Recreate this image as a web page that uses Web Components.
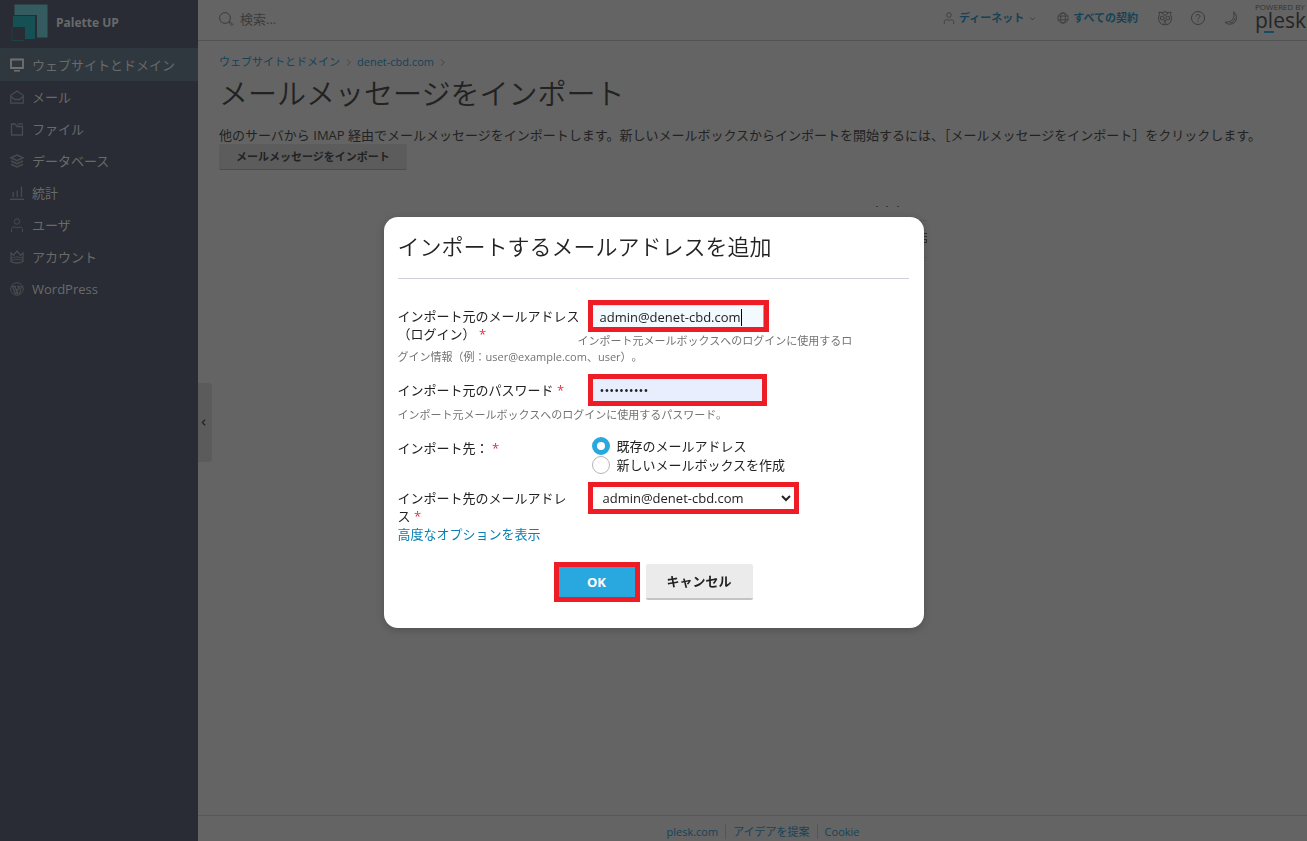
<!DOCTYPE html>
<html lang="ja">
<head>
<meta charset="utf-8">
<title>メールメッセージをインポート</title>
<style>
html, body { height: 100%; }
body {
    margin: 0;
    background: #646464;
    color: #222;
    font: 13px/18px "Open Sans", "Noto Sans CJK JP", sans-serif;
    overflow: hidden;
}
</style>
</head>
<body>
<plesk-app></plesk-app>

<script>
function makeTemplate(html) {
    const template = document.createElement('template');
    template.innerHTML = html;
    return template;
}

// Base class: clones the template of the subclass into an open shadow root
class BaseElement extends HTMLElement {
    constructor() {
        super();
        const shadowRoot = this.attachShadow({mode: 'open'});
        shadowRoot.appendChild(this.constructor.template.content.cloneNode(true));
    }
}

const ICONS = {
    monitor: '<path d="M1 1.500h12v8.500H1z" stroke-width="1.800"/><path d="M4 12.800h6" stroke-width="1.600"/>',
    mail: '<path d="M.8 5.300 7 1l6.200 4.300v7.900H.8z" stroke-width="1.300"/><path d="M1 6.500l3.500 3h5l3.500-3" stroke-width="1.300"/>',
    folder: '<path d="M1.500 2h3.500l2 2.500h5.500v8.500h-11z" stroke-width="1.300"/><path d="M7.500 1.500l1 1.500M9 1.800h4" stroke-width="1.300"/>',
    stack: '<path d="M7 1l6 2.800-6 2.800-6-2.800z" stroke-width="1.500"/><path d="M1 7l6 2.800L13 7M1 10.200l6 2.800 6-2.800" stroke-width="1.500"/>',
    stats: '<path d="M0 13.300h14" stroke-width="1.400"/><path d="M3.200 11V6M7.200 11V4.500M11.500 11V.5" stroke-width="1.300"/>',
    user: '<circle cx="7" cy="3.500" r="2.700"/><path d="M1.500 14v-2.500c0-1.500 1-2.500 2.500-2.500h1c1 1 3 1 4 0h1c1.500 0 2.500 1 2.500 2.500V14"/>',
    crown: '<path d="M1 3l2.500 2.200L7 1l3.500 4.200L13 3v8.500c-2.500 2-9.500 2-12 0z" stroke-width="1.300"/><path d="M1 8.500c3-2 9-2 12 0"/><path d="M1 10.800c3-2 9-2 12 0"/>',
    wordpress: '<circle cx="7" cy="7" r="6.300"/><path d="M2.500 4.300l3 8M4.800 4.300l3.200 8M8.500 5.500l-2.500 6.500M2 4.300h4M7 4.300h3.500M9 4.300c0 2 2 3 1.500 4.500L9 12M11.500 4l.7 2.500" stroke-width="1.300"/>',
    globe: '<circle cx="7" cy="7" r="6"/><ellipse cx="7" cy="7" rx="2.800" ry="6"/><path d="M1.500 4.800h11M1.500 9.200h11"/>',
    search: '<circle cx="6" cy="6" r="5.400"/><path d="M10 10l1-.500 2.800 3-1 1-2.800-2.800z"/>',
    panda: '<path d="M1.500 3.500L1 1l3 .8L7 .5l3 1.300 3-.8-.5 2.500c1.200 2 1.200 4.500.5 6.500-1 2.500-3 3.800-6 3.800S2 12.500 1 10C.3 8 .3 5.500 1.500 3.500z"/><path d="M4 2l3 2.500L10 2M6 9.500h2l-1 1.200zM5.500 12h3"/><circle cx="4.200" cy="7" r="1.900"/><circle cx="9.800" cy="7" r="1.900"/>',
    help: '<circle cx="7" cy="7" r="6.500"/><path d="M5 5.500c0-2.700 4-2.500 4-.2 0 1.500-2 1.500-2 3.200M7 9.800v1.200"/>',
    moon: '<path d="M9.500.8c5 3.500 3.500 12.400-3.500 12.400-2 0-3.800-.7-5-2.200 7 1 10.500-4.500 8.500-10.200z"/><path d="M11 7.500c-1 2.500-2.500 4-5 4.500"/>',
    left: '<path d="M9 3.500L5.500 7 9 10.500" stroke-width="1.500"/>',
    right: '<path d="M5 2.500L9.500 7 5 11.500" stroke-width="1.300"/>',
    down: '<path d="M3.500 5.500L7 9l3.500-3.500" stroke-width="1.500"/>',
};

// <line-icon name="mail">: size comes from --size, colour from `color`
class LineIcon extends BaseElement {
    static observedAttributes = ['name'];
    static template = makeTemplate(`<style>
:host { display: inline-block; flex: none; width: var(--size, 14px); height: var(--size, 14px); }
svg { display: block; width: 100%; height: 100%; fill: none; stroke: currentColor; overflow: visible; }
</style><svg viewBox="0 0 14 14" aria-hidden="true"></svg>`);

    attributeChangedCallback(name, oldValue, value) {
        this.shadowRoot.querySelector('svg').innerHTML = ICONS[value] || '';
    }
}
customElements.define('line-icon', LineIcon);

class NavItem extends BaseElement {
    static template = makeTemplate(`<style>
:host { display: block; }
a {
    display: flex;
    align-items: center;
    gap: 8px;
    height: 32px;
    padding: 0 10px;
    color: #696a6b;
    text-decoration: none;
}
line-icon { color: #484a4e; }
:host([active]) a { height: 33px; background: #30383f; }
:host([active]) line-icon { color: #707070; }
</style><a href="#"><line-icon></line-icon><slot></slot></a>`);

    connectedCallback() {
        this.shadowRoot.querySelector('line-icon').setAttribute('name', this.getAttribute('icon'));
    }
}
customElements.define('nav-item', NavItem);

class SideBar extends BaseElement {
    static template = makeTemplate(`<style>
:host { display: block; flex: none; width: 198px; background: #292c34; }
header {
    display: flex;
    align-items: center;
    gap: 8px;
    height: 48px;
    padding: 0 11px 3px;
    box-sizing: border-box;
    color: #686a6c;
    font-size: 12px;
    font-weight: 700;
}
header svg { width: 37px; height: 38px; }
</style>
<header>
    <svg viewBox="0 0 37 38" aria-hidden="true">
        <path d="M3.500.5h33v33H26V11H3.500z" fill="#345c60"/>
        <path d="M2 12h22v23H14V23H2z" fill="#155054"/>
        <path d="M1 23.500v13h11.500" fill="none" stroke="#1d4347"/>
    </svg>
    <span>Palette UP</span>
</header>
<nav><slot></slot></nav>`);
}
customElements.define('side-bar', SideBar);

class TopBar extends BaseElement {
    static template = makeTemplate(`<style>
:host {
    display: flex;
    align-items: center;
    height: 40px;
    padding-left: 21px;
    border-bottom: 1px solid #525252;
    color: #3c3c3c;
}
.search { display: flex; align-items: center; gap: 7px; flex: 1; padding-bottom: 3px; }
input { flex: 1; min-width: 0; padding: 0; border: 0; outline: 0; background: none; font: inherit; color: inherit; }
input::placeholder { color: #3c3c3c; opacity: 1; }
.tools { display: flex; align-items: center; gap: 20px; padding: 0 1px 4px 0; }
a { display: flex; align-items: center; gap: 4px; color: #164256; font-size: 11px; font-weight: 700; text-decoration: none; }
a line-icon { --size: 12px; color: #3c3c3c; }
a .caret { --size: 9px; }
button { display: flex; padding: 0; border: 0; background: none; color: inherit; }
.tools button + button { margin-left: -1px; }
.brand { flex: none; margin-left: -3px; color: #252525; }
.brand small { display: block; font-size: 8px; line-height: 8px; white-space: nowrap; color: #333; }
.brand b { display: block; font-size: 21px; line-height: 18px; font-weight: 400; }
.brand i { display: block; width: 10px; height: 2px; margin: 2px 0 0 9px; background: #144d61; }
</style>
<label class="search"><line-icon name="search"></line-icon><input type="search" placeholder="検索..." aria-label="検索"></label>
<div class="tools">
    <a href="#"><line-icon name="user"></line-icon>ディーネット<line-icon class="caret" name="down"></line-icon></a>
    <a href="#"><line-icon name="globe"></line-icon>すべての契約</a>
    <button type="button" aria-label="フィードバック"><line-icon name="panda"></line-icon></button>
    <button type="button" aria-label="ヘルプ"><line-icon name="help"></line-icon></button>
    <button type="button" aria-label="ダークモード"><line-icon name="moon"></line-icon></button>
    <div class="brand"><small>POWERED BY</small><b>plesk</b><i></i></div>
</div>`);
}
customElements.define('top-bar', TopBar);

class ImportPage extends BaseElement {
    static template = makeTemplate(`<style>
:host { display: block; flex: 1; padding: 12px 21px 0; }
nav { display: flex; align-items: center; gap: 4px; font-size: 11px; }
nav a { color: #164256; text-decoration: none; }
nav line-icon { --size: 9px; color: #3c3c3c; }
h1 { margin: 3px 0 0; font-size: 29px; line-height: 40px; font-weight: 350; }
p { margin: 12px 0 0; }
button {
    display: block;
    height: 26px;
    padding: 0 17px;
    border: 0;
    border-bottom: 1px solid #4d4d4d;
    border-radius: 2px;
    background: #5c5c5c;
    color: #222;
    font: 700 11px/18px "Open Sans", "Noto Sans CJK JP", sans-serif;
}
svg { display: block; width: 100%; height: 90px; }
</style>
<nav>
    <a href="#">ウェブサイトとドメイン</a><line-icon name="right"></line-icon>
    <a href="#">denet-cbd.com</a><line-icon name="right"></line-icon>
</nav>
<h1>メールメッセージをインポート</h1>
<p>他のサーバから IMAP 経由でメールメッセージをインポートします。新しいメールボックスからインポートを開始するには、［メールメッセージをインポート］をクリックします。</p>
<button type="button">メールメッセージをインポート</button>
<!-- edges of the list that stay visible around the dialog -->
<svg aria-hidden="true">
    <path d="M657 36.500h2M667 36.500h2M678 36.500h2" stroke="#3a3a3a"/>
    <path d="M640 50.500h68M640 87.500h68" stroke="#5c5c5c"/>
    <path d="M704 63.500h4M704 66.500h4M704 69.500h4M704 72.500h4M707.500 69v4" stroke="#303030"/>
    <path d="M67 126h2v2h-2z" fill="#000"/>
</svg>`);
}
customElements.define('import-page', ImportPage);

class PageFooter extends BaseElement {
    static template = makeTemplate(`<style>
:host {
    display: flex;
    justify-content: center;
    align-items: center;
    height: 26px;
    padding: 6px 0 0 21px;
    box-sizing: border-box;
    border-top: 1px solid #575757;
    font-size: 11px;
}
a { padding: 0 7px; color: #164256; text-decoration: none; line-height: 15px; }
a + a { border-left: 1px solid #555; }
</style><a href="#">plesk.com</a><a href="#">アイデアを提案</a><a href="#">Cookie</a>`);
}
customElements.define('page-footer', PageFooter);

// One row of the form: floated label, control, and a hint that runs round the label
class FieldRow extends BaseElement {
    static template = makeTemplate(`<style>
:host { display: block; }
:host::after { content: ''; display: block; clear: left; }
::slotted([slot=label]) { float: left; width: 180px; padding-top: 7px; white-space: nowrap; }
.control { display: flow-root; margin-left: 190px; }
::slotted([slot=hint]) {
    display: block;
    padding: 1px 0;
    font-size: 11px;
    line-height: 16px;
    color: #737373;
    text-spacing-trim: space-all;
}
</style><slot name="label"></slot><div class="control"><slot></slot></div><slot name="hint"></slot>`);
}
customElements.define('field-row', FieldRow);

// Red frame that points the reader to a control
class MarkFrame extends BaseElement {
    static template = makeTemplate(`<style>
:host { display: block; width: fit-content; border: 5px solid #ee1c25; position: relative; }
</style><slot></slot>`);
}
customElements.define('mark-frame', MarkFrame);

class ImportDialog extends BaseElement {
    static template = makeTemplate(`<style>
:host {
    position: fixed;
    inset: 0;
    display: flex;
    align-items: center;
    justify-content: center;
    padding-top: 4px;
}
section {
    width: 540px;
    padding: 14px 15px 26px 14px;
    box-sizing: border-box;
    border-radius: 14px;
    background: #fff;
    box-shadow: 0 2px 8px rgba(0, 0, 0, .2);
}
h2 { margin: 0 0 21px; padding-bottom: 17px; border-bottom: 1px solid #d0d0db; font-size: 22px; line-height: 30px; font-weight: 350; }
.rows { display: flex; flex-direction: column; gap: 8px; }
em { color: #d9344f; font-style: normal; }
input, select { display: block; box-sizing: border-box; margin: 0; border: 0; outline: 0; height: 22px; font: inherit; color: #222; }
#login, #password { width: 169px; padding: 0 7px; }
#login { width: 171px; background: #f2faff; border-top: 1px solid #d5e6f0; border-right: 1px solid #6bb5d8; }
#password { background: #e8eefd; }
.caret { position: absolute; left: 148px; top: 4px; width: 1px; height: 17px; background: #000; }
select { width: 201px; padding: 0 0 0 6px; background: #fff; }
.options { padding-top: 4px; }
.options label { display: flex; align-items: center; gap: 7px; height: 19px; padding-left: 4px; }
input[type=radio] { appearance: none; width: 18px; height: 18px; border: 1px solid #b5b5b5; border-radius: 50%; background: #fff; }
input[type=radio]:checked { border: 5px solid #29a8df; }
a { color: #0a80b5; text-decoration: none; }
footer { display: flex; justify-content: center; align-items: center; gap: 6px; margin-top: 19px; }
button { display: block; border: 0; font: inherit; font-weight: 700; }
.ok { width: 76px; height: 30px; background: #29a8df; color: #fff; }
.cancel { width: 107px; height: 36px; border-bottom: 2px solid #c4c4c4; border-radius: 2px; background: #ebebeb; color: #222; }
</style>
<section role="dialog" aria-labelledby="title">
    <h2 id="title">インポートするメールアドレスを追加</h2>
    <div class="rows">
        <field-row>
            <label slot="label" for="login">インポート元のメールアドレス<br>（ログイン） <em>*</em></label>
            <mark-frame><input id="login" type="text" value="admin@denet-cbd.com"><span class="caret"></span></mark-frame>
            <span slot="hint">インポート元メールボックスへのログインに使用するロ<br>グイン情報（例：user@example.com、user）。</span>
        </field-row>
        <field-row>
            <label slot="label" for="password">インポート元のパスワード <em>*</em></label>
            <mark-frame><input id="password" type="password" value="abcdefghij"></mark-frame>
            <span slot="hint">インポート元メールボックスへのログインに使用するパスワード。</span>
        </field-row>
        <field-row>
            <span slot="label">インポート先： <em>*</em></span>
            <div class="options">
                <label><input type="radio" name="target" checked>既存のメールアドレス</label>
                <label><input type="radio" name="target">新しいメールボックスを作成</label>
            </div>
        </field-row>
        <field-row>
            <label slot="label" for="address">インポート先のメールアドレ<br>ス <em>*</em></label>
            <mark-frame><select id="address"><option>admin@denet-cbd.com</option></select></mark-frame>
        </field-row>
    </div>
    <a href="#">高度なオプションを表示</a>
    <footer>
        <mark-frame><button class="ok" type="button">OK</button></mark-frame>
        <button class="cancel" type="button">キャンセル</button>
    </footer>
</section>`);
}
customElements.define('import-dialog', ImportDialog);

class PleskApp extends BaseElement {
    static template = makeTemplate(`<style>
:host { display: flex; min-height: 100%; }
main { display: flex; flex-direction: column; flex: 1; min-width: 0; }
.collapse {
    position: absolute;
    left: 198px;
    top: 383px;
    display: flex;
    align-items: center;
    width: 14px;
    height: 79px;
    padding: 0;
    border: 0;
    border-radius: 0 4px 4px 0;
    background: #5b5b5b;
    color: #222;
}
.collapse line-icon { --size: 11px; }
</style>
<side-bar>
    <nav-item icon="monitor" active>ウェブサイトとドメイン</nav-item>
    <nav-item icon="mail">メール</nav-item>
    <nav-item icon="folder">ファイル</nav-item>
    <nav-item icon="stack">データベース</nav-item>
    <nav-item icon="stats">統計</nav-item>
    <nav-item icon="user">ユーザ</nav-item>
    <nav-item icon="crown">アカウント</nav-item>
    <nav-item icon="wordpress">WordPress</nav-item>
</side-bar>
<main>
    <top-bar></top-bar>
    <import-page></import-page>
    <page-footer></page-footer>
</main>
<button class="collapse" type="button" aria-label="メニューを折りたたむ"><line-icon name="left"></line-icon></button>
<import-dialog></import-dialog>`);
}
customElements.define('plesk-app', PleskApp);
</script>
</body>
</html>
